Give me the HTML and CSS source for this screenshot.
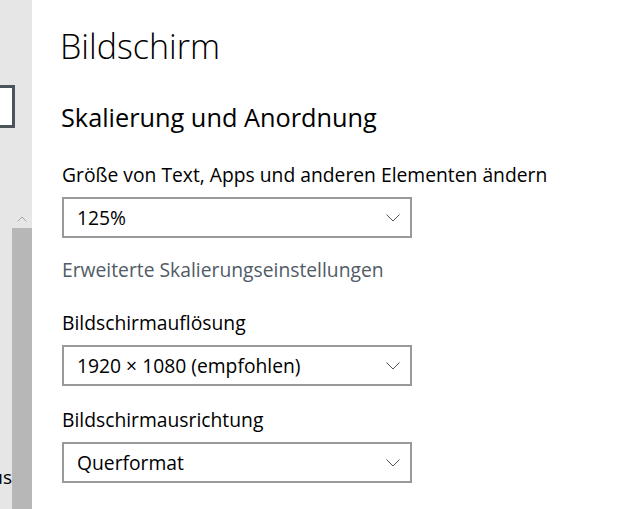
FILE: index.html
```html
<!DOCTYPE html>
<html lang="de">
<head>
    <meta charset="UTF-8">
    <meta name="viewport" content="width=device-width, initial-scale=1.0">
    <title>Bildschirm</title>
    <link rel="stylesheet" href="styles.css">
</head>
<body>
    <div class="sidebar">
        <div class="nav-column">
            <div class="search-box"></div>
            <div class="nav-item">Fokus</div>
        </div>
        <div class="scrollbar">
            <svg class="scroll-up" width="10" height="6" viewBox="0 0 10 6">
                <polyline points="0.5,5.5 5,1 9.5,5.5" fill="none" stroke="#a6a6a6" stroke-width="1"/>
            </svg>
            <div class="scroll-thumb"></div>
        </div>
    </div>

    <div class="content">
        <h1 class="page-title">Bildschirm</h1>
        <h2 class="section-title">Skalierung und Anordnung</h2>

        <div class="field-label first">Größe von Text, Apps und anderen Elementen ändern</div>
        <div class="dropdown">
            <span>125%</span>
            <svg class="chevron" width="14" height="8" viewBox="0 0 14 8">
                <polyline points="0.5,0.5 7,7 13.5,0.5" fill="none" stroke="#555" stroke-width="1"/>
            </svg>
        </div>

        <a class="link" href="#">Erweiterte Skalierungseinstellungen</a>

        <div class="field-label after-link">Bildschirmauflösung</div>
        <div class="dropdown">
            <span>1920 × 1080 (empfohlen)</span>
            <svg class="chevron" width="14" height="8" viewBox="0 0 14 8">
                <polyline points="0.5,0.5 7,7 13.5,0.5" fill="none" stroke="#555" stroke-width="1"/>
            </svg>
        </div>

        <div class="field-label">Bildschirmausrichtung</div>
        <div class="dropdown">
            <span>Querformat</span>
            <svg class="chevron" width="14" height="8" viewBox="0 0 14 8">
                <polyline points="0.5,0.5 7,7 13.5,0.5" fill="none" stroke="#555" stroke-width="1"/>
            </svg>
        </div>
    </div>
</body>
</html>
```

FILE: styles.css
```css
body {
    margin: 0;
    padding: 0;
    height: 509px;
    overflow: hidden;
    display: flex;
    font-family: "Open Sans", "Noto Sans", sans-serif;
    background-color: #fff;
    color: #000;
}

.sidebar {
    width: 32px;
    flex-shrink: 0;
    display: flex;
    background-color: #e6e6e6;
    overflow: hidden;
}
.nav-column {
    width: 12px;
    display: flex;
    flex-direction: column;
}
.search-box {
    width: 200px;
    height: 37px;
    margin-top: 85px;
    margin-left: -191px;
    flex-shrink: 0;
    border: 3px solid #4c545b;
    background-color: #fff;
}
.nav-item {
    margin-top: auto;
    margin-bottom: 20px;
    display: flex;
    justify-content: flex-end;
    font-size: 19px;
    line-height: 24px;
    white-space: nowrap;
}
.scrollbar {
    width: 20px;
    display: flex;
    flex-direction: column;
}
.scroll-up {
    margin: 216px 0 0 5px;
    display: block;
}
.scroll-thumb {
    flex: 1;
    margin-top: 6px;
    background-color: #b7b7b7;
}

.content {
    flex: 1;
    padding: 26px 0 0 30px;
}
.page-title {
    margin: 0 0 0 -2px;
    font-size: 34px;
    line-height: 40px;
    font-weight: 300;
}
.section-title {
    margin: 35px 0 0 -1px;
    font-size: 25.3px;
    line-height: 32px;
    font-weight: 400;
}
.field-label {
    margin-top: 22px;
    font-size: 19.3px;
    line-height: 24px;
}
.field-label.first {
    margin-top: 30px;
}
.field-label.after-link {
    margin-top: 29px;
}
.dropdown {
    width: 323px;
    height: 37px;
    margin-top: 10px;
    border: 2px solid #999;
    padding: 0 10px 0 13px;
    display: flex;
    align-items: center;
    justify-content: space-between;
    font-size: 19.3px;
}
.link {
    display: block;
    margin-top: 20px;
    font-size: 19.3px;
    line-height: 24px;
    color: #505b66;
    text-decoration: none;
}
```
